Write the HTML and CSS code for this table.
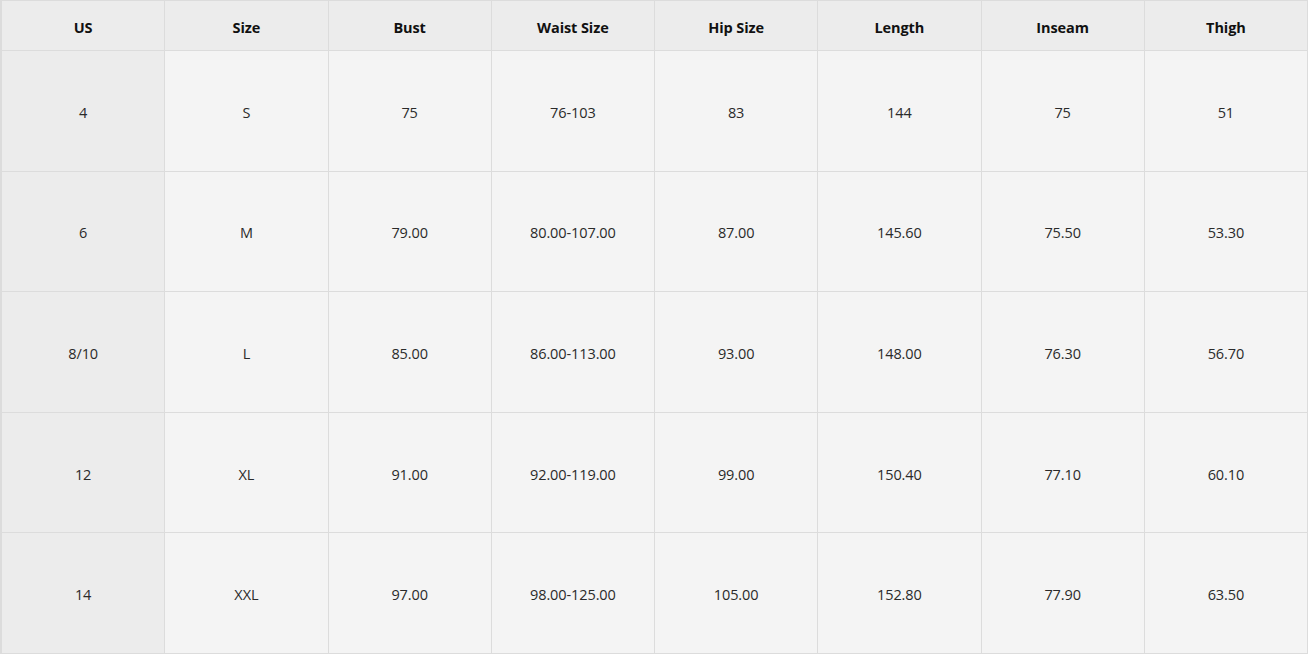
FILE: index.html
```html
<!DOCTYPE html>
<html lang="en">
<head>
<meta charset="utf-8">
<title>Size Chart</title>
<link rel="stylesheet" href="styles.css">
</head>
<body>
<div class="chart">
  <div class="cell head">US</div>
  <div class="cell head">Size</div>
  <div class="cell head">Bust</div>
  <div class="cell head">Waist Size</div>
  <div class="cell head">Hip Size</div>
  <div class="cell head">Length</div>
  <div class="cell head">Inseam</div>
  <div class="cell head">Thigh</div>

  <div class="cell first">4</div>
  <div class="cell">S</div>
  <div class="cell">75</div>
  <div class="cell">76-103</div>
  <div class="cell">83</div>
  <div class="cell">144</div>
  <div class="cell">75</div>
  <div class="cell">51</div>

  <div class="cell first">6</div>
  <div class="cell">M</div>
  <div class="cell">79.00</div>
  <div class="cell">80.00-107.00</div>
  <div class="cell">87.00</div>
  <div class="cell">145.60</div>
  <div class="cell">75.50</div>
  <div class="cell">53.30</div>

  <div class="cell first">8/10</div>
  <div class="cell">L</div>
  <div class="cell">85.00</div>
  <div class="cell">86.00-113.00</div>
  <div class="cell">93.00</div>
  <div class="cell">148.00</div>
  <div class="cell">76.30</div>
  <div class="cell">56.70</div>

  <div class="cell first">12</div>
  <div class="cell">XL</div>
  <div class="cell">91.00</div>
  <div class="cell">92.00-119.00</div>
  <div class="cell">99.00</div>
  <div class="cell">150.40</div>
  <div class="cell">77.10</div>
  <div class="cell">60.10</div>

  <div class="cell first">14</div>
  <div class="cell">XXL</div>
  <div class="cell">97.00</div>
  <div class="cell">98.00-125.00</div>
  <div class="cell">105.00</div>
  <div class="cell">152.80</div>
  <div class="cell">77.90</div>
  <div class="cell">63.50</div>
</div>
</body>
</html>
```
FILE: styles.css
```css
html, body {
  margin: 0;
  padding: 0;
  background: #f4f4f4;
}

.chart {
  box-sizing: border-box;
  width: 1308px;
  height: 654px;
  display: grid;
  grid-template-columns: repeat(8, 1fr);
  grid-template-rows: 49px repeat(5, 1fr);
  gap: 1px;
  padding: 1px 1px 1px 2px;
  background: #dcdcdc;
  font-family: "Open Sans", "Noto Sans", sans-serif;
  font-size: 14.5px;
  color: #2a2a2a;
}

.cell {
  box-sizing: border-box;
  display: flex;
  align-items: center;
  justify-content: center;
  padding-top: 3px;
  background: #f4f4f4;
  letter-spacing: -0.1px;
}

.cell.head {
  padding-top: 4px;
  background: #ececec;
  font-weight: 700;
  color: #111;
}

.cell.first {
  background: #ececec;
}
```
